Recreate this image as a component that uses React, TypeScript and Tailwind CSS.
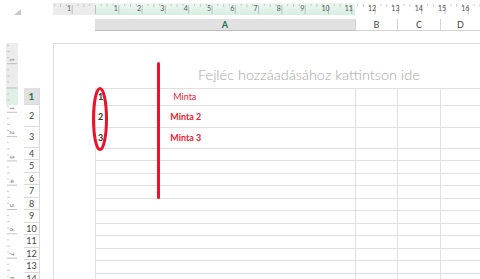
const rows = [
  { n: 1, h: 17 },
  { n: 2, h: 22 },
  { n: 3, h: 21 },
  ...Array.from({ length: 12 }, (_, i) => ({ n: i + 4, h: i % 2 === 0 ? 12 : 13 })),
]

const cellText: Record<number, { num: string; label: string; bold: boolean; off: string }> = {
  1: { num: '1', label: 'Minta', bold: false, off: 'ml-[70px]' },
  2: { num: '2', label: 'Minta 2', bold: true, off: 'ml-[67px]' },
  3: { num: '3', label: 'Minta 3', bold: true, off: 'ml-[67px]' },
}

function TopRuler() {
  const inch = 23.3
  const zero = 42.5
  const ticks: number[] = []
  for (let q = -8; q < 76; q++) ticks.push(zero + (q * inch) / 4)
  return (
    <svg width="427" height="12" className="mt-[3px] block">
      <defs>
        <linearGradient id="rg" x1="0" y1="0" x2="0" y2="1">
          <stop offset="0" stopColor="#eef8f2" />
          <stop offset="1" stopColor="#d7eee1" />
        </linearGradient>
      </defs>
      <rect x="0" y="0" width="42" height="12" fill="#ececec" />
      <rect x="42" y="0" width="260" height="12" fill="url(#rg)" />
      {ticks.map((x, i) => {
        const q = i - 8
        if (x < 0 || x > 427) return null
        if (q % 4 === 0) return <line key={i} x1={x} y1="2" x2={x} y2="11" stroke="#a8a8a8" strokeWidth="0.7" />
        return <line key={i} x1={x} y1="1" x2={x} y2={q % 2 === 0 ? 4 : 3} stroke="#b4b4b4" strokeWidth="0.7" />
      })}
      <text x="16" y="8" fontSize="7" fill="#555" textAnchor="middle" fontFamily="Lato, sans-serif">1</text>
      {Array.from({ length: 16 }, (_, i) => (
        <text key={i} x={zero + (i + 1) * inch - 3} y="8" fontSize="7" fill="#555" textAnchor="middle" fontFamily="Lato, sans-serif">
          {i + 1}
        </text>
      ))}
    </svg>
  )
}

function LeftRuler() {
  const inch = 24.3
  const zero = 45
  const ticks: number[] = []
  for (let q = -8; q < 40; q++) ticks.push(zero + (q * inch) / 4)
  const labels = [-1, 1, 2, 3, 4, 5, 6, 7, 8]
  return (
    <svg width="12" height="236" className="block overflow-visible">
      <rect x="0" y="0" width="12" height="44" fill="#ececec" />
      <rect x="0" y="44" width="12" height="18" fill="#dff1e6" />
      {ticks.map((y, i) => {
        const q = i - 8
        if (y < 0 || y > 236) return null
        if (q % 4 === 0) return <line key={i} x1="1" y1={y} x2="11" y2={y} stroke="#a8a8a8" strokeWidth="0.7" />
        return <line key={i} x1="1" y1={y} x2={q % 2 === 0 ? 4 : 3} y2={y} stroke="#b4b4b4" strokeWidth="0.7" />
      })}
      {labels.map((n) => (
        <text
          key={n}
          x="0"
          y="0"
          fontSize="6"
          fill="#666"
          textAnchor="middle"
          fontFamily="Lato, sans-serif"
          transform={`translate(4 ${zero + n * inch - 4}) rotate(90)`}
        >
          {Math.abs(n)}
        </text>
      ))}
    </svg>
  )
}

export default function App() {
  return (
    <div className="relative w-[480px] h-[279px] overflow-hidden bg-white font-['Lato',sans-serif] text-[#444]">
      {/* ruler strip */}
      <div className="flex h-[19px]">
        <div className="w-[53px] relative">
          <svg width="7" height="6" className="absolute left-[14px] top-[9px]">
            <polygon points="7,0 7,6 0,6" fill="#c8c8c8" />
          </svg>
        </div>
        <TopRuler />
      </div>

      {/* column headers */}
      <div className="flex h-[12px] text-[9px] leading-[11px]">
        <div className="w-[95px]" />
        <div className="w-[260px] bg-[#e1e1e1] border-b border-[#bdbdbd] text-center font-bold text-[#217346]">A</div>
        <div className="w-[42px] border-l border-b border-[#d4d4d4] text-center">B</div>
        <div className="w-[43px] border-l border-b border-[#d4d4d4] text-center">C</div>
        <div className="flex-1 border-l border-b border-[#d4d4d4] text-center">D</div>
      </div>

      <div className="h-[12px]" />

      {/* body */}
      <div className="flex">
        <div className="w-[24px] pl-[6px]">
          <LeftRuler />
        </div>

        <div className="w-[16px] flex flex-col text-[9px]">
          <div className="h-[45px]" />
          {rows.map((r) => (
            <div
              key={r.n}
              style={{ height: r.h }}
              className={`flex items-center justify-center border-b border-r border-[#dadada] ${
                r.n === 1 ? 'bg-[#e1e1e1] font-bold text-[#217346] text-[10px]' : ''
              }`}
            >
              {r.n}
            </div>
          ))}
        </div>

        <div className="w-[13px]" />

        <div className="flex-1 border-l border-t border-[#dcdcdc]">
          <div className="h-[44px] pl-[144px] pt-[22px] text-[14.5px] leading-[18px] text-[#a6a6a6] whitespace-nowrap font-light">
            Fejléc hozzáadásához kattintson ide
          </div>
          <div className="ml-[41px] border-l border-t border-[#e0e0e0]">
            {rows.map((r) => {
              const t = cellText[r.n]
              return (
                <div key={r.n} style={{ height: r.h }} className="flex border-b border-[#e0e0e0]">
                  <div className="w-[259px] flex items-center text-[9px]">
                    {t && (
                      <>
                        <span className="pl-[2px] font-bold text-[#333]">{t.num}</span>
                        <span className={`${t.off} text-[#ee1c36] ${t.bold ? 'font-bold' : ''}`}>{t.label}</span>
                      </>
                    )}
                  </div>
                  <div className="w-[42px] border-l border-[#e0e0e0]" />
                  <div className="w-[43px] border-l border-[#e0e0e0]" />
                  <div className="flex-1 border-l border-[#e0e0e0]" />
                </div>
              )
            })}
          </div>
        </div>
      </div>

      {/* hand-drawn annotations */}
      <svg width="18" height="66" className="absolute left-[91px] top-[86px]">
        <ellipse cx="9" cy="33" rx="6.5" ry="30.5" fill="none" stroke="#e8142c" strokeWidth="3" />
      </svg>
      <div className="absolute left-[157px] top-[62px] w-[3px] h-[137px] rounded-full bg-[#e8142c]" />
    </div>
  )
}
